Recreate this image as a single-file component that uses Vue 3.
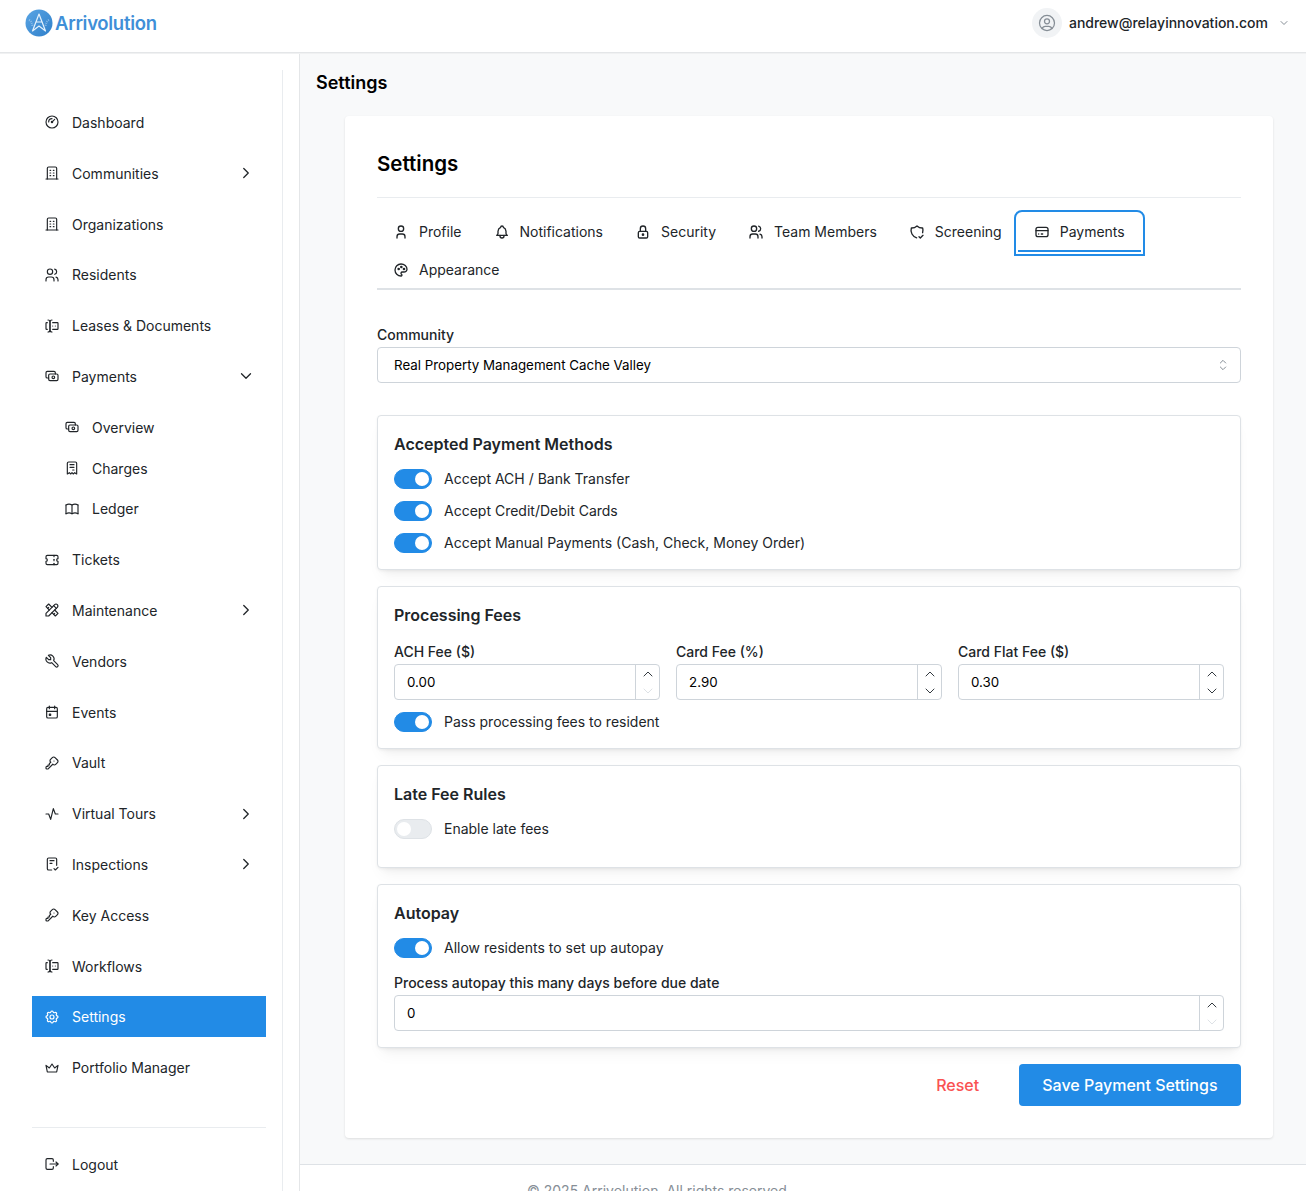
<template>
  <div class="app">
    <header class="topbar">
      <div class="brand">
        <svg class="brand-mark" width="28" height="28" viewBox="0 0 28 28">
          <defs>
            <linearGradient id="markFill" x1="0" y1="0" x2="1" y2="1">
              <stop offset="0" stop-color="#5aa5e4" />
              <stop offset="1" stop-color="#2f7fca" />
            </linearGradient>
          </defs>
          <circle cx="14" cy="14" r="13.5" fill="url(#markFill)" />
          <path d="M4 11c2 1 3 3 3.5 6M24 11c-2 1-3 3-3.5 6" fill="none" stroke="#cfe4f8" stroke-width="2" stroke-dasharray="1 1" opacity="0.5" />
          <path d="M14 5L7.5 22l6.5-5 6.5 5L14 5zM11.2 13h5.6" fill="none" stroke="#e4f1fc" stroke-width="1.2" stroke-linejoin="round" />
        </svg>
        <span class="brand-name">Arrivolution</span>
      </div>
      <div class="account">
        <span class="avatar"><Icon name="userCircle" :size="20" class="avatar-icon" /></span>
        <span class="account-email">andrew@relayinnovation.com</span>
        <Icon name="chevronDown" :size="12" :stroke="2" class="account-caret" />
      </div>
    </header>

    <div class="shell">
      <aside class="sidebar">
        <div class="sidebar-inner">
          <nav class="nav">
            <template v-for="item in navItems" :key="item.label">
              <a class="nav-item" :class="{ active: item.active }">
                <Icon :name="item.icon" :size="16" :stroke="1.75" />
                <span class="nav-label">{{ item.label }}</span>
                <Icon v-if="item.caret" :name="item.caret" :size="18" :stroke="1.75" class="nav-caret" />
              </a>
              <div v-if="item.children" class="nav-children">
                <a v-for="child in item.children" :key="child.label" class="nav-item child">
                  <Icon :name="child.icon" :size="16" :stroke="1.75" />
                  <span class="nav-label">{{ child.label }}</span>
                </a>
              </div>
            </template>
          </nav>
          <div class="nav-bottom">
            <a class="nav-item">
              <Icon name="logout" :size="16" :stroke="1.75" />
              <span class="nav-label">Logout</span>
            </a>
          </div>
        </div>
      </aside>

      <main class="main">
        <h1 class="page-title">Settings</h1>

        <section class="card">
          <h2 class="card-title">Settings</h2>

          <div class="tabs">
            <button v-for="tab in tabs" :key="tab.label" class="tab" :class="{ active: tab.label === activeTab }">
              <Icon :name="tab.icon" :size="16" :stroke="2" />
              <span>{{ tab.label }}</span>
            </button>
          </div>

          <div class="field community">
            <label class="field-label">Community</label>
            <div class="select-wrap">
              <select class="select">
                <option>Real Property Management Cache Valley</option>
              </select>
              <Icon name="selector" :size="16" class="select-icon" />
            </div>
          </div>

          <div class="section">
            <h3 class="section-title">Accepted Payment Methods</h3>
            <div class="switch-stack">
              <div v-for="m in methods" :key="m" class="switch-row">
                <span class="switch on"><span class="thumb"></span></span>
                <span class="switch-label">{{ m }}</span>
              </div>
            </div>
          </div>

          <div class="section">
            <h3 class="section-title">Processing Fees</h3>
            <div class="fee-grid">
              <div v-for="fee in fees" :key="fee.label" class="field">
                <label class="field-label">{{ fee.label }}</label>
                <div class="number">
                  <input class="number-input" :value="fee.value" />
                  <div class="spin">
                    <Icon name="chevronUp" :size="16" class="spin-btn" />
                    <Icon name="chevronDown" :size="16" class="spin-btn" :class="{ off: fee.atMin }" />
                  </div>
                </div>
              </div>
            </div>
            <div class="switch-row pass">
              <span class="switch on"><span class="thumb"></span></span>
              <span class="switch-label">Pass processing fees to resident</span>
            </div>
          </div>

          <div class="section">
            <h3 class="section-title">Late Fee Rules</h3>
            <div class="switch-row">
              <span class="switch"><span class="thumb"></span></span>
              <span class="switch-label">Enable late fees</span>
            </div>
            <div class="late-space"></div>
          </div>

          <div class="section">
            <h3 class="section-title">Autopay</h3>
            <div class="switch-row">
              <span class="switch on"><span class="thumb"></span></span>
              <span class="switch-label">Allow residents to set up autopay</span>
            </div>
            <div class="field autopay-days">
              <label class="field-label">Process autopay this many days before due date</label>
              <div class="number">
                <input class="number-input" value="0" />
                <div class="spin">
                  <Icon name="chevronUp" :size="16" class="spin-btn" />
                  <Icon name="chevronDown" :size="16" class="spin-btn off" />
                </div>
              </div>
            </div>
          </div>

          <div class="actions">
            <button class="btn-reset">Reset</button>
            <button class="btn-save">Save Payment Settings</button>
          </div>
        </section>

        <footer class="page-footer">© 2025 Arrivolution. All rights reserved.</footer>
      </main>
    </div>
  </div>
</template>

<script setup>
import { h } from 'vue';

// tabler style outline icons, 24 grid
const iconPaths = {
  gauge: ['M3 12a9 9 0 1 0 18 0a9 9 0 1 0 -18 0', 'M11 12a1 1 0 1 0 2 0a1 1 0 1 0 -2 0', 'M13.41 10.59l2.59 -2.59', 'M7 12a5 5 0 0 1 5 -5'],
  building: ['M3 21l18 0', 'M9 8l1 0', 'M9 12l1 0', 'M9 16l1 0', 'M14 8l1 0', 'M14 12l1 0', 'M14 16l1 0', 'M5 21v-16a2 2 0 0 1 2 -2h10a2 2 0 0 1 2 2v16'],
  users: ['M5 7a4 4 0 1 0 8 0a4 4 0 1 0 -8 0', 'M3 21v-2a4 4 0 0 1 4 -4h4a4 4 0 0 1 4 4v2', 'M16 3.13a4 4 0 0 1 0 7.75', 'M21 21v-2a4 4 0 0 0 -3 -3.85'],
  forms: ['M12 3a3 3 0 0 0 -3 3v12a3 3 0 0 0 3 3', 'M6 3a3 3 0 0 1 3 3v12a3 3 0 0 1 -3 3', 'M13 7h7a1 1 0 0 1 1 1v8a1 1 0 0 1 -1 1h-7', 'M5 7h-1a1 1 0 0 0 -1 1v8a1 1 0 0 0 1 1h1', 'M17 12h.01', 'M13 12h.01'],
  cash: ['M7 11a2 2 0 0 1 2 -2h10a2 2 0 0 1 2 2v6a2 2 0 0 1 -2 2h-10a2 2 0 0 1 -2 -2z', 'M12 14a2 2 0 1 0 4 0a2 2 0 1 0 -4 0', 'M17 9v-2a2 2 0 0 0 -2 -2h-10a2 2 0 0 0 -2 2v6a2 2 0 0 0 2 2h2'],
  receipt: ['M5 21v-16a2 2 0 0 1 2 -2h10a2 2 0 0 1 2 2v16l-3 -2l-2 2l-2 -2l-2 2l-2 -2l-3 2m4 -14h6m-6 4h6m-2 4h2'],
  book: ['M3 19a9 9 0 0 1 9 0a9 9 0 0 1 9 0', 'M3 6a9 9 0 0 1 9 0a9 9 0 0 1 9 0', 'M3 6l0 13', 'M12 6l0 13', 'M21 6l0 13'],
  ticket: ['M15 5l0 2', 'M15 11l0 2', 'M15 17l0 2', 'M5 5h14a2 2 0 0 1 2 2v3a2 2 0 0 0 0 4v3a2 2 0 0 1 -2 2h-14a2 2 0 0 1 -2 -2v-3a2 2 0 0 0 0 -4v-3a2 2 0 0 1 2 -2'],
  tools: ['M3 21h4l13 -13a1.5 1.5 0 0 0 -4 -4l-13 13v4', 'M14.5 5.5l4 4', 'M12 8l-5 -5l-4 4l5 5', 'M7 8l-1.5 1.5', 'M16 12l5 5l-4 4l-5 -5', 'M16 17l-1.5 1.5'],
  tool: ['M7 10h3v-3l-3.5 -3.5a6 6 0 0 1 8 8l6 6a2 2 0 0 1 -3 3l-6 -6a6 6 0 0 1 -8 -8l3.5 3.5'],
  calendar: ['M4 7a2 2 0 0 1 2 -2h12a2 2 0 0 1 2 2v12a2 2 0 0 1 -2 2h-12a2 2 0 0 1 -2 -2z', 'M16 3l0 4', 'M8 3l0 4', 'M4 11l16 0', 'M8 15h2v2h-2z'],
  key: ['M16.555 3.843l3.602 3.602a2.877 2.877 0 0 1 0 4.069l-2.643 2.643a2.877 2.877 0 0 1 -4.069 0l-.301 -.301l-6.558 6.558a2 2 0 0 1 -1.239 .578l-.175 .008h-1.172a1 1 0 0 1 -.993 -.883l-.007 -.117v-1.172a2 2 0 0 1 .467 -1.284l.119 -.13l.414 -.414h2v-2h2v-2l2.144 -2.144l-.301 -.301a2.877 2.877 0 0 1 0 -4.069l2.643 -2.643a2.877 2.877 0 0 1 4.069 0z', 'M15 9h.01'],
  activity: ['M3 12h4l3 8l4 -16l3 8h4'],
  inspect: ['M11.5 21h-4.5a2 2 0 0 1 -2 -2v-14a2 2 0 0 1 2 -2h10a2 2 0 0 1 2 2v9', 'M9 7h6', 'M9 11h3', 'M15 19l2 2l4 -4'],
  settings: ['M10.325 4.317c.426 -1.756 2.924 -1.756 3.35 0a1.724 1.724 0 0 0 2.573 1.066c1.543 -.94 3.31 .826 2.37 2.37a1.724 1.724 0 0 0 1.065 2.572c1.756 .426 1.756 2.924 0 3.35a1.724 1.724 0 0 0 -1.066 2.573c.94 1.543 -.826 3.31 -2.37 2.37a1.724 1.724 0 0 0 -2.572 1.065c-.426 1.756 -2.924 1.756 -3.35 0a1.724 1.724 0 0 0 -2.573 -1.066c-1.543 .94 -3.31 -.826 -2.37 -2.37a1.724 1.724 0 0 0 -1.065 -2.572c-1.756 -.426 -1.756 -2.924 0 -3.35a1.724 1.724 0 0 0 1.066 -2.573c-.94 -1.543 .826 -3.31 2.37 -2.37c1 .608 2.296 .07 2.572 -1.065z', 'M9 12a3 3 0 1 0 6 0a3 3 0 1 0 -6 0'],
  crown: ['M12 6l4 6l5 -4l-2 10h-14l-2 -10l5 4z'],
  logout: ['M14 8v-2a2 2 0 0 0 -2 -2h-7a2 2 0 0 0 -2 2v12a2 2 0 0 0 2 2h7a2 2 0 0 0 2 -2v-2', 'M9 12h12l-3 -3', 'M18 15l3 -3'],
  user: ['M8 7a4 4 0 1 0 8 0a4 4 0 0 0 -8 0', 'M6 21v-2a4 4 0 0 1 4 -4h4a4 4 0 0 1 4 4v2'],
  bell: ['M10 5a2 2 0 1 1 4 0a7 7 0 0 1 4 6v3a4 4 0 0 0 2 3h-16a4 4 0 0 0 2 -3v-3a7 7 0 0 1 4 -6', 'M9 17v1a3 3 0 0 0 6 0v-1'],
  lock: ['M5 13a2 2 0 0 1 2 -2h10a2 2 0 0 1 2 2v6a2 2 0 0 1 -2 2h-10a2 2 0 0 1 -2 -2v-6z', 'M11 16a1 1 0 1 0 2 0a1 1 0 0 0 -2 0', 'M8 11v-4a4 4 0 1 1 8 0v4'],
  shieldCheck: ['M11.46 20.846a12 12 0 0 1 -7.96 -14.846a12 12 0 0 0 8.5 -3a12 12 0 0 0 8.5 3a12 12 0 0 1 -.09 7.06', 'M15 19l2 2l4 -4'],
  card: ['M3 8a3 3 0 0 1 3 -3h12a3 3 0 0 1 3 3v8a3 3 0 0 1 -3 3h-12a3 3 0 0 1 -3 -3z', 'M3 10l18 0', 'M7 15l.01 0', 'M11 15l2 0'],
  palette: ['M12 21a9 9 0 0 1 0 -18c4.97 0 9 3.582 9 8c0 1.06 -.474 2.078 -1.318 2.828c-.844 .75 -1.989 1.172 -3.182 1.172h-2.5a2 2 0 0 0 -1 3.75a1.3 1.3 0 0 1 -1 2.25', 'M7.5 10.5a1 1 0 1 0 2 0a1 1 0 1 0 -2 0', 'M11.5 7.5a1 1 0 1 0 2 0a1 1 0 1 0 -2 0', 'M15.5 10.5a1 1 0 1 0 2 0a1 1 0 1 0 -2 0'],
  userCircle: ['M3 12a9 9 0 1 0 18 0a9 9 0 1 0 -18 0', 'M9 10a3 3 0 1 0 6 0a3 3 0 1 0 -6 0', 'M6.168 18.849a4 4 0 0 1 3.832 -2.849h4a4 4 0 0 1 3.834 2.855'],
  selector: ['M8 9l4 -4l4 4', 'M16 15l-4 4l-4 -4'],
  chevronRight: ['M9 6l6 6l-6 6'],
  chevronDown: ['M6 9l6 6l6 -6'],
  chevronUp: ['M6 15l6 -6l6 6']
};

const Icon = (props) =>
  h(
    'svg',
    {
      width: props.size,
      height: props.size,
      viewBox: '0 0 24 24',
      fill: 'none',
      stroke: 'currentColor',
      'stroke-width': props.stroke || 1.5,
      'stroke-linecap': 'round',
      'stroke-linejoin': 'round'
    },
    iconPaths[props.name].map((d) => h('path', { d }))
  );
Icon.props = ['name', 'size', 'stroke'];

const navItems = [
  { label: 'Dashboard', icon: 'gauge' },
  { label: 'Communities', icon: 'building', caret: 'chevronRight' },
  { label: 'Organizations', icon: 'building' },
  { label: 'Residents', icon: 'users' },
  { label: 'Leases & Documents', icon: 'forms' },
  {
    label: 'Payments',
    icon: 'cash',
    caret: 'chevronDown',
    children: [
      { label: 'Overview', icon: 'cash' },
      { label: 'Charges', icon: 'receipt' },
      { label: 'Ledger', icon: 'book' }
    ]
  },
  { label: 'Tickets', icon: 'ticket' },
  { label: 'Maintenance', icon: 'tools', caret: 'chevronRight' },
  { label: 'Vendors', icon: 'tool' },
  { label: 'Events', icon: 'calendar' },
  { label: 'Vault', icon: 'key' },
  { label: 'Virtual Tours', icon: 'activity', caret: 'chevronRight' },
  { label: 'Inspections', icon: 'inspect', caret: 'chevronRight' },
  { label: 'Key Access', icon: 'key' },
  { label: 'Workflows', icon: 'forms' },
  { label: 'Settings', icon: 'settings', active: true },
  { label: 'Portfolio Manager', icon: 'crown' }
];

const tabs = [
  { label: 'Profile', icon: 'user' },
  { label: 'Notifications', icon: 'bell' },
  { label: 'Security', icon: 'lock' },
  { label: 'Team Members', icon: 'users' },
  { label: 'Screening', icon: 'shieldCheck' },
  { label: 'Payments', icon: 'card' },
  { label: 'Appearance', icon: 'palette' }
];
const activeTab = 'Payments';

const methods = [
  'Accept ACH / Bank Transfer',
  'Accept Credit/Debit Cards',
  'Accept Manual Payments (Cash, Check, Money Order)'
];

const fees = [
  { label: 'ACH Fee ($)', value: '0.00', atMin: true },
  { label: 'Card Fee (%)', value: '2.90' },
  { label: 'Card Flat Fee ($)', value: '0.30' }
];
</script>

<style scoped>
.app {
  height: 1191px;
  overflow: hidden;
  display: flex;
  flex-direction: column;
  background: #fff;
  color: #212529;
  font-family: Inter, "Liberation Sans", sans-serif;
  font-size: 14px;
}

.topbar {
  position: relative;
  z-index: 1;
  flex: none;
  height: 53px;
  box-sizing: border-box;
  display: flex;
  align-items: center;
  justify-content: space-between;
  padding: 0 16px 6px 25px;
  background: #fff;
  border-bottom: 1px solid #e4e6e8;
  box-shadow: 0 1px 0 #f0f1f2;
}

.brand {
  display: flex;
  align-items: center;
  gap: 2px;
}

.brand-name {
  font-size: 18.5px;
  font-weight: 600;
  letter-spacing: -0.3px;
  color: #3f8fd8;
}

.account {
  display: flex;
  align-items: center;
  font-weight: 500;
  color: #212529;
}

.avatar {
  width: 30px;
  height: 30px;
  border-radius: 50%;
  background: #f1f3f5;
  display: flex;
  align-items: center;
  justify-content: center;
  margin-right: 7px;
}

.avatar-icon {
  color: #868e96;
}

.account-email {
  margin: 0 10px 1px 0;
}

.account-caret {
  color: #868e96;
}

.shell {
  flex: 1;
  display: flex;
  min-height: 0;
}

.sidebar {
  flex: none;
  width: 300px;
  box-sizing: border-box;
  border-right: 1px solid #e4e6e8;
  padding-top: 17px;
}

.sidebar-inner {
  width: 283px;
  height: 100%;
  box-sizing: border-box;
  border-right: 1px solid #e9ecef;
  padding: 32.1px 16px 0 32px;
}

.nav {
  display: flex;
  flex-direction: column;
  gap: 10px;
}

.nav-children {
  display: flex;
  flex-direction: column;
}

.nav-item {
  height: 40.8px;
  box-sizing: border-box;
  display: flex;
  align-items: center;
  gap: 12px;
  padding: 0 12px;
  color: #212529;
}

.nav-item svg {
  flex: none;
}

.nav-item.child {
  padding-left: 32px;
}

.nav-item.active {
  background: #228be6;
  color: #fff;
}

.nav-label {
  flex: 1;
}

.nav-caret {
  margin-right: -1px;
}

.nav-bottom {
  margin-top: 39px;
  padding-top: 16px;
  border-top: 1px solid #e9ecef;
}

.main {
  flex: 1;
  min-width: 0;
  background: #f8f9fa;
  display: flex;
  flex-direction: column;
}

.page-title {
  margin: 16px 0 19px 16px;
  font-size: 18px;
  line-height: 28px;
  font-weight: 600;
  color: #000;
}

.card {
  width: 928px;
  box-sizing: border-box;
  margin-left: 45px;
  padding: 32px;
  background: #fff;
  border-radius: 4px;
  box-shadow: 0 1px 3px rgba(0, 0, 0, 0.08), 0 1px 2px rgba(0, 0, 0, 0.04);
}

.card-title {
  margin: 0;
  padding-bottom: 17px;
  border-bottom: 1px solid #e9ecef;
  font-size: 20.5px;
  line-height: 32px;
  font-weight: 600;
  color: #000;
}

.tabs {
  margin-top: 16px;
  display: flex;
  flex-wrap: wrap;
  box-shadow: inset 0 -2px 0 #dee2e6;
}

.tab {
  height: 38px;
  box-sizing: border-box;
  display: flex;
  align-items: center;
  gap: 10px;
  padding: 0 16px 1px;
  background: none;
  border: none;
  border-bottom: 2px solid transparent;
  border-radius: 4px 4px 0 0;
  font: inherit;
  color: #212529;
}

.tab.active {
  border-bottom-color: #228be6;
  outline: 2px solid #228be6;
  outline-offset: 2px;
}

.field-label {
  display: block;
  font-weight: 500;
  line-height: 24px;
  color: #212529;
}

.community {
  margin-top: 33px;
}

.select-wrap {
  position: relative;
}

.select {
  display: block;
  width: 100%;
  height: 36px;
  box-sizing: border-box;
  padding: 0 30px 0 16px;
  border: 1px solid #ced4da;
  border-radius: 4px;
  background: #fff;
  font: inherit;
  font-size: 13.33px;
  color: #000;
  appearance: none;
  outline: none;
}

.select-icon {
  position: absolute;
  right: 10px;
  top: 10px;
  color: #868e96;
}

.section {
  margin-top: 16px;
  padding: 16px;
  background: #fff;
  border: 1px solid #dee2e6;
  border-radius: 4px;
  box-shadow: 0 1px 3px rgba(0, 0, 0, 0.05), 0 10px 15px -5px rgba(0, 0, 0, 0.05), 0 7px 7px -5px rgba(0, 0, 0, 0.04);
}

.community + .section {
  margin-top: 32px;
}

.section-title {
  margin: 0 0 12px;
  font-size: 16px;
  line-height: 25px;
  font-weight: 600;
  color: #212529;
}

.switch-stack {
  display: flex;
  flex-direction: column;
  gap: 12px;
}

.switch-row {
  display: flex;
  align-items: center;
  gap: 12px;
  height: 20px;
}

.switch-label {
  margin-bottom: 1px;
}

.switch {
  position: relative;
  flex: none;
  width: 38px;
  height: 20px;
  box-sizing: border-box;
  border: 1px solid #dee2e6;
  border-radius: 10px;
  background: #e9ecef;
}

.switch.on {
  border-color: #228be6;
  background: #228be6;
}

.thumb {
  position: absolute;
  left: 2px;
  top: 2px;
  width: 14px;
  height: 14px;
  border-radius: 50%;
  background: #fff;
}

.switch.on .thumb {
  left: 20px;
}

.fee-grid {
  display: grid;
  grid-template-columns: repeat(3, minmax(0, 1fr));
  gap: 16px;
}

.pass {
  margin-top: 12px;
}

.late-space {
  height: 12px;
}

.autopay-days {
  margin-top: 13px;
}

.number {
  display: flex;
  height: 36px;
  box-sizing: border-box;
  border: 1px solid #ced4da;
  border-radius: 4px;
  background: #fff;
}

.number-input {
  flex: 1;
  min-width: 0;
  padding: 0 12px;
  border: none;
  outline: none;
  background: none;
  font: inherit;
  font-size: 13.33px;
  color: #000;
}

.spin {
  flex: none;
  width: 24px;
  box-sizing: border-box;
  border-left: 1px solid #ced4da;
  display: flex;
  flex-direction: column;
  align-items: center;
  justify-content: space-around;
}

.spin-btn {
  color: #343a40;
}

.spin-btn.off {
  color: #dee2e6;
}

.actions {
  margin-top: 16px;
  display: flex;
  justify-content: flex-end;
  gap: 16px;
}

.btn-reset,
.btn-save {
  height: 42px;
  padding: 0 23.5px;
  border: none;
  border-radius: 4px;
  font: inherit;
  font-size: 16px;
  font-weight: 500;
}

.btn-reset {
  background: none;
  color: #fa5252;
}

.btn-save {
  background: #228be6;
  color: #fff;
}

.page-footer {
  margin-top: 26px;
  padding: 16px 0 16px 227px;
  background: #fff;
  border-top: 1px solid #dee2e6;
  line-height: 20px;
  color: #868e96;
}
</style>

<style>
html,
body {
  background: #fff;
}
</style>
